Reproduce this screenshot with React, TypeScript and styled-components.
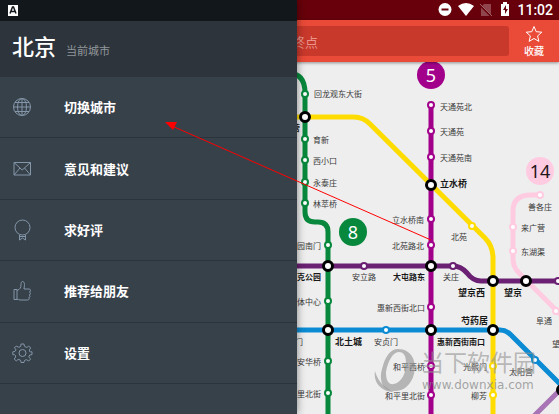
import React from "react";
import styled, { createGlobalStyle, css } from "styled-components";

const GlobalStyle = createGlobalStyle`
  *, *::before, *::after { box-sizing: border-box; }
  body {
    margin: 0;
    font-family: "Noto Sans CJK SC", "Noto Sans", sans-serif;
    background: #eeeeee;
  }
`;

const Screen = styled.div`
  position: relative;
  display: flex;
  flex-direction: column;
  min-height: 100vh;
  overflow: hidden;
`;

const StatusBar = styled.header`
  display: flex;
  align-items: center;
  justify-content: flex-end;
  gap: 3px;
  height: 20px;
  padding: 0 6px;
  background: #67000a;
  color: #ffffff;
`;

const Clock = styled.time`
  font: 500 14px/18px Roboto, sans-serif;
`;

const Toolbar = styled.form`
  position: relative;
  display: flex;
  align-items: center;
  height: 42px;
  padding-left: 8px;
  background: #ea4a38;
  box-shadow: 0 1px 3px rgba(0, 0, 0, 0.4);
`;

const Destination = styled.input`
  flex: 1;
  min-width: 0;
  height: 30px;
  padding: 0 8px 0 284px;
  border: 0;
  border-radius: 3px;
  background: #c8382b;
  color: #ffffff;
  font: 13px/20px "Noto Sans CJK SC", sans-serif;
  &::placeholder {
    color: #e8958c;
    opacity: 1;
  }
`;

const Favourite = styled.button`
  display: flex;
  flex-direction: column;
  align-items: center;
  width: 50px;
  padding: 2px 0 0;
  border: 0;
  background: none;
  color: #ffffff;
  font: 500 10px/16px "Noto Sans CJK SC", sans-serif;
`;

const MapPane = styled.main`
  display: flex;
  flex: 1;
  min-height: 352px;
  background: #eeeeee;
`;

const MapDrawing = styled.svg`
  flex: 1;
  width: 100%;
  height: auto;
  font-family: "Noto Sans CJK SC", sans-serif;
`;

const Label = styled.text<{ $strong?: boolean; $large?: boolean }>`
  font-size: ${(p) => (p.$large ? 9 : 8)}px;
  fill: #383838;
  dominant-baseline: central;
  ${(p) =>
    p.$strong &&
    css`
      font-weight: 700;
      fill: #181818;
    `}
`;

const LineNumber = styled.text`
  font: 18px "Noto Sans", sans-serif;
  text-anchor: middle;
`;

const Drawer = styled.aside`
  position: absolute;
  inset: 0 auto 0 0;
  display: flex;
  flex-direction: column;
  width: 297px;
  max-width: 90vw;
  background: #37414a;
  box-shadow: 0 0 8px rgba(0, 0, 0, 0.45);
`;

const DrawerStatus = styled.div`
  display: flex;
  align-items: center;
  height: 21px;
  padding: 0 8px;
  background: #12171b;
`;

const City = styled.div`
  display: flex;
  align-items: baseline;
  gap: 10px;
  height: 56px;
  padding: 6px 12px;
  background: #2d343b;
`;

const CityName = styled.h1`
  margin: 0;
  color: #ffffff;
  font-size: 22px;
  font-weight: 500;
  line-height: 36px;
`;

const CityHint = styled.span`
  color: #92979b;
  font-size: 11px;
`;

const Menu = styled.nav`
  display: grid;
  grid-auto-rows: 1fr;
  min-height: 307px;
`;

const MenuItem = styled.button`
  display: flex;
  align-items: center;
  gap: 31px;
  padding: 0 12px;
  border: 0;
  border-bottom: 1px solid #2b343c;
  background: none;
  color: #ffffff;
  font: 700 13px/20px "Noto Sans CJK SC", sans-serif;
  text-align: left;
`;

const MenuIcon = styled.svg`
  flex: none;
  width: 21px;
  height: 22px;
  fill: none;
  stroke: #8496a9;
  stroke-width: 1;
`;

const Overlay = styled.svg`
  position: absolute;
  inset: 0;
  width: 100%;
  height: 100%;
  pointer-events: none;
`;

const WatermarkName = styled.text`
  font: 23px "Noto Sans CJK SC", sans-serif;
  fill: #929292;
  fill-opacity: 0.6;
`;

const WatermarkSite = styled.text`
  font: 12px "DejaVu Sans", sans-serif;
  fill: #8a8a8a;
  fill-opacity: 0.75;
`;

const C = {
  green: "#07883c",
  yellow: "#ffdc00",
  magenta: "#a2008b",
  violet: "#6b2073",
  blue: "#0a8bd4",
  pink: "#ffcbe1",
  lilac: "#a874b5",
};

const lines = [
  { color: C.pink, d: "M540 195 H531 Q513 195 513 211 V259 Q513 267 519 273 L565 319" },
  { color: C.lilac, d: "M561 389 L530 420" },
  { color: C.yellow, d: "M290 117 H354 Q363 117 370 124 L485 238 Q493 246 493 258 V420" },
  { color: C.violet, d: "M290 266 H453 Q461 266 467 273 Q473 281 481 281 H565" },
  { color: C.blue, d: "M290 330 H500 Q506 330 511 335 L565 389" },
  { color: C.green, d: "M288 73 Q305 73 305 93 V212 Q305 222 315 222 H318 Q328 222 328 232 V420" },
  { color: C.magenta, d: "M431 104 V420" },
];

const stops: [number, number, string][] = [
  [305, 94, C.green], [305, 139, C.green], [305, 160, C.green], [305, 182, C.green], [305, 203, C.green],
  [328, 245, C.green], [328, 301, C.green], [328, 361, C.green], [328, 393, C.green],
  [431, 105, C.magenta], [431, 131, C.magenta], [431, 157, C.magenta], [431, 219, C.magenta],
  [431, 245, C.magenta], [431, 307, C.magenta], [431, 366, C.magenta], [431, 395, C.magenta],
  [472, 226, C.yellow], [493, 366, C.yellow], [493, 395, C.yellow],
  [364, 266, C.violet], [453, 266, C.violet], [558, 281, C.violet],
  [386, 330, C.blue], [535, 360, C.blue],
  [540, 195, C.pink], [513, 227, C.pink], [513, 251, C.pink], [556, 311, C.pink],
];

const transfers = [
  [305, 117], [431, 185], [328, 266], [431, 266], [493, 281], [526, 281],
  [328, 330], [431, 330], [493, 330], [562, 390],
];

type Station = { name: string; x: number; y: number; end?: boolean; strong?: boolean; large?: boolean };

const stations: Station[] = [
  { name: "回龙观东大街", x: 314, y: 93 },
  { name: "霍营", x: 300, y: 127, end: true, strong: true },
  { name: "育新", x: 313, y: 139 },
  { name: "西小口", x: 313, y: 160 },
  { name: "永泰庄", x: 313, y: 182 },
  { name: "林萃桥", x: 313, y: 203 },
  { name: "森林公园南门", x: 321, y: 245, end: true },
  { name: "奥林匹克公园", x: 321, y: 276, end: true, strong: true },
  { name: "奥体中心", x: 321, y: 301, end: true },
  { name: "健德门", x: 303, y: 341, end: true },
  { name: "安华桥", x: 321, y: 361, end: true },
  { name: "安德里北街", x: 321, y: 393, end: true },
  { name: "北土城", x: 335, y: 341, strong: true, large: true },
  { name: "安立路", x: 352, y: 276 },
  { name: "安贞门", x: 374, y: 341 },
  { name: "天通苑北", x: 440, y: 106 },
  { name: "天通苑", x: 440, y: 131 },
  { name: "天通苑南", x: 440, y: 157 },
  { name: "立水桥", x: 440, y: 183, strong: true, large: true },
  { name: "立水桥南", x: 424, y: 219, end: true },
  { name: "北苑路北", x: 424, y: 245, end: true },
  { name: "大屯路东", x: 425, y: 276, end: true, strong: true },
  { name: "惠新西街北口", x: 425, y: 307, end: true },
  { name: "惠新西街南口", x: 437, y: 341, strong: true },
  { name: "和平西桥", x: 425, y: 366, end: true },
  { name: "和平里北街", x: 425, y: 395, end: true },
  { name: "北苑", x: 451, y: 236 },
  { name: "关庄", x: 443, y: 276 },
  { name: "望京西", x: 485, y: 292, end: true, strong: true, large: true },
  { name: "望京", x: 504, y: 292, strong: true, large: true },
  { name: "芍药居", x: 488, y: 320, end: true, strong: true, large: true },
  { name: "光熙门", x: 487, y: 366, end: true },
  { name: "柳芳", x: 487, y: 395, end: true },
  { name: "太阳宫", x: 509, y: 371 },
  { name: "阜通", x: 536, y: 320 },
  { name: "望京南", x: 552, y: 343 },
  { name: "善各庄", x: 528, y: 206 },
  { name: "来广营", x: 521, y: 227 },
  { name: "东湖渠", x: 521, y: 251 },
];

const badges = [
  { n: "5", x: 431, y: 75, color: C.magenta, ink: "#ffffff" },
  { n: "8", x: 353, y: 232, color: C.green, ink: "#ffffff" },
  { n: "14", x: 540, y: 171, color: C.pink, ink: "#1d1719" },
];

const menu = [
  {
    name: "切换城市",
    icon: (
      <>
        <circle cx="10" cy="11" r="8.500" />
        <ellipse cx="10" cy="11" rx="4.500" ry="8.500" />
        <path d="M10 2.500v17M1.500 11h17M3 6.500h14M3 15.500h14" />
      </>
    ),
  },
  {
    name: "意见和建议",
    icon: <path d="M2 4.500h16.500v12.500H2zM2 4.500l8.200 7.500L18.500 4.500M2 17l6-7M18.500 17l-6-7" />,
  },
  {
    name: "求好评",
    icon: (
      <>
        <circle cx="10.500" cy="8.500" r="7.500" />
        <path d="M7.500 16v5l3-2 3 2v-5M8 17.500h5" />
      </>
    ),
  },
  {
    name: "推荐给朋友",
    icon: (
      <path d="M2 9.500h3v10H2zM5 10.500c3-1 4-3 4-6 0-2 .5-3 1.500-3s2 1 2 3-.5 3-.5 4.500h5c2 0 2 3 .3 3 1.700.5 1.500 2.800-.2 3 1.400.6 1 2.600-.4 2.700 1 .8.500 2.300-1 2.300H8c-1.200 0-2-.9-3-.9" />
    ),
  },
  {
    name: "设置",
    icon: (
      <>
        <circle cx="10.500" cy="11" r="3.500" />
        <path d="M9 2h3q-.2 3 2.300 3.300Q16 5.200 16.700 4l2 2Q16.500 8 17.700 9.600 18.500 10 20 9.800v2.800q-3-.2-3.100 2Q17 16 18.700 17l-2 2Q14.500 17 13 18 12 18.500 12 20.500H9Q9.200 17.600 7 17.500 5.500 17.500 4.300 19l-2-2Q4.200 15 3.500 13.500 3 12.500 .8 12.600V9.800Q3.500 10 4 8 4 6.800 2.300 6l2-2Q6.500 5.800 8 5 9 4.200 9 2z" />
      </>
    ),
  },
];

function SystemIcons() {
  return (
    <svg width="76" height="16" viewBox="0 0 76 16" aria-label="系统状态">
      <circle cx="7" cy="7.500" r="6.500" fill="#fff" />
      <path d="M3.500 7.500h7" stroke="#67000a" strokeWidth="2" />
      <path d="M20 4Q28 -2 36 4L28 14z" fill="#fff" />
      <path d="M43 5l3-3h7v12H43z" fill="#90454c" />
      <path d="M41 2l13 13" stroke="#67000a" strokeWidth="2" />
      <path d="M42 2l12 12" stroke="#a0656a" />
      <path d="M63 2h2V0h4v2h2v12h-8z" fill="#fff" />
      <path d="M68 3l-3 5h2v4l3-5h-2z" fill="#67000a" />
    </svg>
  );
}

function SubwayMap() {
  return (
    <MapDrawing viewBox="0 62 559 352" preserveAspectRatio="xMaxYMin slice" role="img" aria-label="北京地铁线路图">
      {lines.map((l) => (
        <path key={l.color} d={l.d} fill="none" stroke={l.color} strokeWidth="5" />
      ))}
      {stops.map(([x, y, color]) => (
        <circle key={`${x}-${y}`} cx={x} cy={y} r="3" fill="#fff" stroke={color} strokeWidth="2" />
      ))}
      {transfers.map(([x, y]) => (
        <circle key={`${x}-${y}`} cx={x} cy={y} r="4.500" fill="#fff" stroke="#000" strokeWidth="3" />
      ))}
      {stations.map((s) => (
        <Label key={s.name} x={s.x} y={s.y} textAnchor={s.end ? "end" : "start"} $strong={s.strong} $large={s.large}>
          {s.name}
        </Label>
      ))}
      {badges.map((b) => (
        <g key={b.n}>
          <circle cx={b.x} cy={b.y} r="14" fill={b.color} />
          <LineNumber x={b.x} y={b.y + 7} fill={b.ink}>{b.n}</LineNumber>
        </g>
      ))}
    </MapDrawing>
  );
}

export default function App() {
  return (
    <>
      <GlobalStyle />
      <Screen>
        <StatusBar>
          <SystemIcons />
          <Clock>11:02</Clock>
        </StatusBar>
        <Toolbar>
          <Destination placeholder="终点" aria-label="终点" />
          <Favourite type="button">
            <svg width="18" height="18" viewBox="0 0 18 18" fill="none" stroke="#fff" aria-hidden="true">
              <path d="M9 1.500l2.200 5.200 5.600.5-4.200 3.700 1.300 5.500L9 13.500l-4.900 2.900 1.300-5.500L1.200 7.200l5.600-.5z" />
            </svg>
            收藏
          </Favourite>
        </Toolbar>
        <MapPane>
          <SubwayMap />
        </MapPane>
        <Drawer>
          <DrawerStatus>
            <svg width="10" height="11" viewBox="0 0 10 11" aria-hidden="true">
              <path d="M0 0h10v11H0z" fill="#fff" />
              <path d="M2 8.500L4.500 2h1L8 8.500M3 6.500h4" fill="none" stroke="#12171b" strokeWidth="1.500" />
            </svg>
          </DrawerStatus>
          <City>
            <CityName>北京</CityName>
            <CityHint>当前城市</CityHint>
          </City>
          <Menu>
            {menu.map((m) => (
              <MenuItem key={m.name} type="button">
                <MenuIcon viewBox="0 0 21 22" aria-hidden="true">{m.icon}</MenuIcon>
                {m.name}
              </MenuItem>
            ))}
          </Menu>
        </Drawer>
        <Overlay viewBox="0 0 559 414" preserveAspectRatio="xMaxYMin slice">
          <g fill="#8f8f8f" fillOpacity="0.6">
            <path fillRule="evenodd" d="M398 349C412 349 417 362 414 374C411 386 402 392 393 391C382 390 379 380 382 369C385 357 390 349 398 349ZM399 352C392 352 387 364 386 373C386 381 389 385 394 384C402 382 406 373 406 363C406 356 404 352 399 352Z" />
            <path d="M375 371C373 383 382 392 394 392C385 388 378 382 375 371Z" />
          </g>
          <WatermarkName x="421" y="371">当下软件园</WatermarkName>
          <WatermarkSite x="422" y="389">www.downxia.com</WatermarkSite>
          <path d="M431 240L172 126" stroke="#f00" />
          <path d="M165 122L177 122L173 130z" fill="#f00" />
        </Overlay>
      </Screen>
    </>
  );
}
